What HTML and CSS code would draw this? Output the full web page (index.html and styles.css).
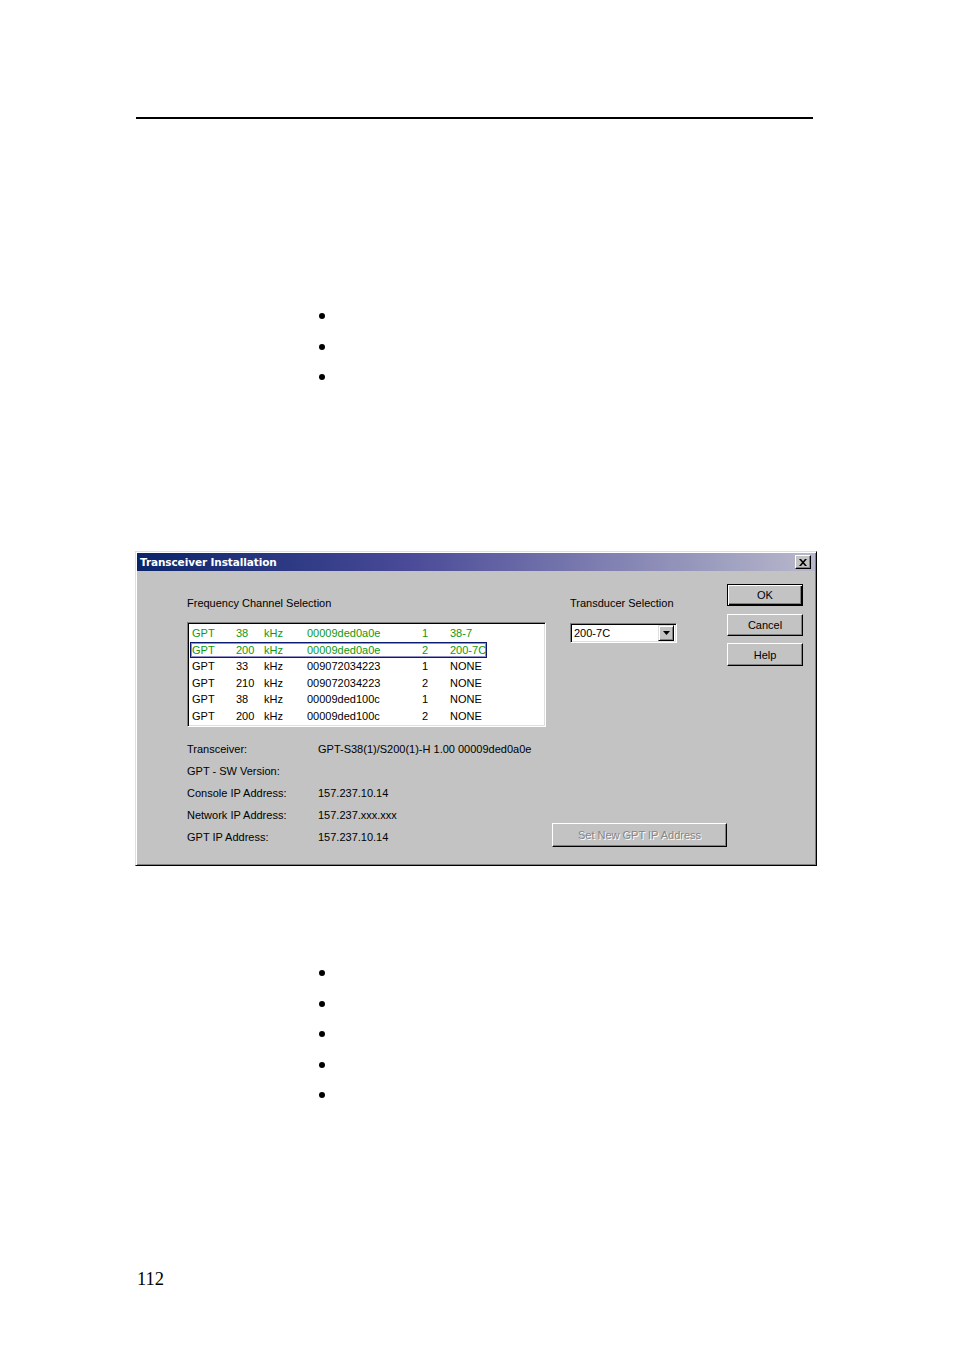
FILE: index.html
```html
<!DOCTYPE html>
<html>
<head>
<meta charset="utf-8">
<link rel="stylesheet" href="styles.css">
</head>
<body>
<div class="page">
  <div class="rule"></div>

  <div class="bullets top-bullets">
    <span class="dot"></span>
    <span class="dot"></span>
    <span class="dot"></span>
  </div>

  <div class="dialog">
    <div class="titlebar">
      <span class="title">Transceiver Installation</span>
      <span class="close">
        <svg width="8" height="7" viewBox="0 0 8 7"><path d="M0 0h2l2 2.2L6 0h2L5 3.5 8 7H6L4 4.8 2 7H0l3-3.5z" fill="#000"/></svg>
      </span>
    </div>
    <div class="body">
      <div class="toprow">
        <div class="col-left">
          <div class="label">Frequency Channel Selection</div>
          <div class="listbox">
            <div class="row green"><span>GPT</span><span>38</span><span>kHz</span><span>00009ded0a0e</span><span>1</span><span>38-7</span></div>
            <div class="row green selected"><span>GPT</span><span>200</span><span>kHz</span><span>00009ded0a0e</span><span>2</span><span>200-7C</span></div>
            <div class="row"><span>GPT</span><span>33</span><span>kHz</span><span>009072034223</span><span>1</span><span>NONE</span></div>
            <div class="row"><span>GPT</span><span>210</span><span>kHz</span><span>009072034223</span><span>2</span><span>NONE</span></div>
            <div class="row"><span>GPT</span><span>38</span><span>kHz</span><span>00009ded100c</span><span>1</span><span>NONE</span></div>
            <div class="row"><span>GPT</span><span>200</span><span>kHz</span><span>00009ded100c</span><span>2</span><span>NONE</span></div>
          </div>
        </div>
        <div class="col-mid">
          <div class="label">Transducer Selection</div>
          <div class="combo">
            <span class="combo-text">200-7C</span>
            <span class="combo-btn">
              <svg width="7" height="4" viewBox="0 0 7 4"><path d="M0 0h7L3.5 4z" fill="#000"/></svg>
            </span>
          </div>
        </div>
        <div class="col-buttons">
          <div class="btn default">OK</div>
          <div class="btn">Cancel</div>
          <div class="btn help">Help</div>
        </div>
      </div>
      <div class="bottomrow">
        <div class="info">
          <div class="info-label">Transceiver:</div><div class="info-value">GPT-S38(1)/S200(1)-H 1.00 00009ded0a0e</div>
          <div class="info-label">GPT - SW Version:</div><div class="info-value"></div>
          <div class="info-label">Console IP Address:</div><div class="info-value">157.237.10.14</div>
          <div class="info-label">Network IP Address:</div><div class="info-value">157.237.xxx.xxx</div>
          <div class="info-label">GPT IP Address:</div><div class="info-value">157.237.10.14</div>
        </div>
        <div class="btn disabled setip">Set New GPT IP Address</div>
      </div>
    </div>
  </div>

  <div class="bullets bottom-bullets">
    <span class="dot"></span>
    <span class="dot"></span>
    <span class="dot"></span>
    <span class="dot"></span>
    <span class="dot"></span>
  </div>

  <div class="pagenum">112</div>
</div>
</body>
</html>
```

FILE: styles.css
```css
html, body {
  margin: 0;
  padding: 0;
  background: #fff;
}

.page {
  width: 954px;
  min-height: 1351px;
  padding-left: 136px;
  padding-top: 117px;
  box-sizing: border-box;
}

.rule {
  width: 677px;
  height: 2px;
  background: #000;
}

.bullets {
  display: flex;
  flex-direction: column;
  gap: 24.5px;
  padding-left: 183px;
}

.top-bullets {
  margin-top: 194px;
}

.bottom-bullets {
  margin-top: 104px;
}

.dot {
  display: block;
  width: 6px;
  height: 6px;
  border-radius: 50%;
  background: #000;
}

.dialog {
  margin-top: 171px;
  margin-left: -1px;
  width: 682px;
  box-sizing: border-box;
  background: #c3c3c3;
  border-top: 1px solid #dfdfdf;
  border-left: 1px solid #dfdfdf;
  border-right: 1px solid #000;
  border-bottom: 1px solid #000;
  box-shadow: inset 1px 1px 0 #fff, inset -1px -1px 0 #808080;
  padding: 1px;
  font-family: "Liberation Sans", Arial, sans-serif;
  font-size: 11px;
  color: #000;
}

.titlebar {
  height: 18px;
  background: linear-gradient(90deg, #0a246a 0%, #4a4a98 40%, #b8b8cc 100%);
  display: flex;
  align-items: center;
  justify-content: space-between;
  padding: 0 4px 0 3px;
}

.title {
  color: #fff;
  font-family: "DejaVu Sans", Verdana, sans-serif;
  font-weight: bold;
  font-size: 10.5px;
  letter-spacing: -0.1px;
}

.close {
  width: 16px;
  height: 14px;
  box-sizing: border-box;
  background: #c3c3c3;
  border-top: 1px solid #fff;
  border-left: 1px solid #fff;
  border-right: 1px solid #000;
  border-bottom: 1px solid #000;
  box-shadow: inset -1px -1px 0 #808080;
  display: flex;
  align-items: center;
  justify-content: center;
}

.body {
  padding: 13px 12px 12px 50px;
}

.toprow {
  display: flex;
  align-items: flex-start;
}

.label {
  line-height: 14px;
  height: 14px;
}

.col-left {
  padding-top: 12px;
}

.col-left .label {
  margin-bottom: 12px;
}

.listbox {
  width: 359px;
  height: 105px;
  box-sizing: border-box;
  background: #fff;
  border-top: 1px solid #808080;
  border-left: 1px solid #808080;
  border-right: 1px solid #fff;
  border-bottom: 1px solid #fff;
  box-shadow: inset 1px 1px 0 #000, inset -1px -1px 0 #dfdfdf;
  padding: 2px 1px 1px 1px;
}

.row {
  display: grid;
  grid-template-columns: 44px 28px 43px 115px 28px 1fr;
  width: 297px;
  height: 16.5px;
  line-height: 16.5px;
  box-sizing: border-box;
  padding-left: 2px;
  margin-left: 1px;
  white-space: nowrap;
  overflow: hidden;
}

.row.green {
  color: #109810;
}

.row.selected {
  border: 1px solid #0a1a70;
  box-shadow: inset 0 0 0 1px #9090c8;
  line-height: 14.5px;
  padding-left: 1px;
}

.col-mid {
  margin-left: 24px;
  padding-top: 12px;
}

.col-mid .label {
  margin-bottom: 13px;
}

.combo {
  width: 107px;
  height: 20px;
  box-sizing: border-box;
  background: #fff;
  border-top: 1px solid #808080;
  border-left: 1px solid #808080;
  border-right: 1px solid #fff;
  border-bottom: 1px solid #fff;
  box-shadow: inset 1px 1px 0 #000, inset -1px -1px 0 #dfdfdf;
  display: flex;
  align-items: center;
  justify-content: space-between;
  padding: 2px 2px 2px 3px;
}

.combo-btn {
  width: 16px;
  height: 16px;
  box-sizing: border-box;
  background: #c3c3c3;
  border-top: 1px solid #dfdfdf;
  border-left: 1px solid #dfdfdf;
  border-right: 1px solid #000;
  border-bottom: 1px solid #000;
  box-shadow: inset 1px 1px 0 #fff, inset -1px -1px 0 #808080;
  display: flex;
  align-items: center;
  justify-content: center;
}

.col-buttons {
  margin-left: 50px;
  display: flex;
  flex-direction: column;
  gap: 7.5px;
}

.btn {
  width: 76px;
  height: 22px;
  box-sizing: border-box;
  background: #c3c3c3;
  border-top: 1px solid #fff;
  border-left: 1px solid #fff;
  border-right: 1px solid #000;
  border-bottom: 1px solid #000;
  box-shadow: inset -1px -1px 0 #808080;
  display: flex;
  align-items: center;
  justify-content: center;
  line-height: 14px;
}

.btn.default {
  border: 1px solid #000;
  box-shadow: inset 1px 1px 0 #fff, inset -1px -1px 0 #000, inset -2px -2px 0 #808080;
}

.btn.help {
  height: 23px;
}

.bottomrow {
  display: flex;
  align-items: flex-end;
  margin-top: 15px;
}

.info {
  display: grid;
  grid-template-columns: 131px 234px;
  grid-auto-rows: 22px;
  line-height: 14px;
}

.info-label, .info-value {
  white-space: nowrap;
}

.btn.setip {
  width: 175px;
  height: 24px;
  margin-bottom: 5px;
}

.btn.disabled {
  color: #868686;
  text-shadow: 1px 1px 0 #fff;
}

.pagenum {
  margin-top: 171px;
  font-family: "Liberation Serif", "Times New Roman", serif;
  font-size: 18.5px;
  line-height: 20px;
  padding-left: 1px;
}
```
